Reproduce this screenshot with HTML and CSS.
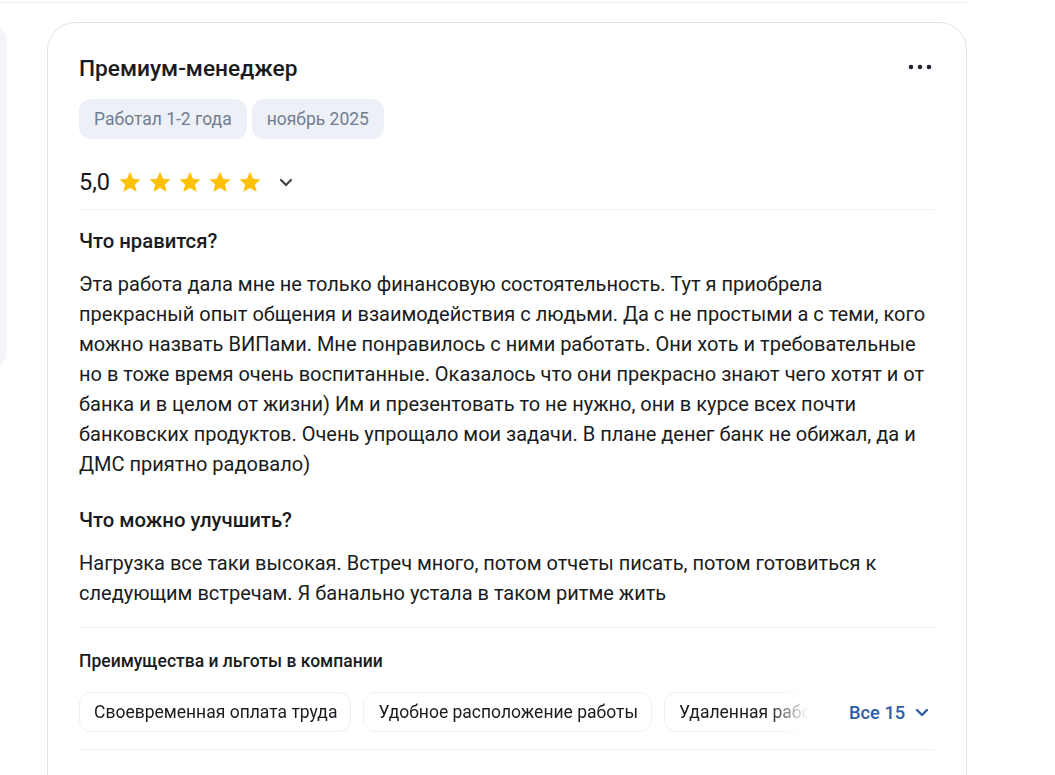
FILE: index.html
```html
<!DOCTYPE html>
<html lang="ru">
<head>
<meta charset="utf-8">
<title>Отзыв</title>
<link rel="stylesheet" href="styles.css">
</head>
<body>
<div class="topline"></div>
<div class="row">
  <div class="side-card"></div>
  <article class="card">
    <header class="card-head">
      <h2 class="title">Премиум-менеджер</h2>
      <button class="more" aria-label="Ещё">
        <svg width="24" height="6" viewBox="0 0 24 6"><circle cx="3" cy="3" r="2.3" fill="#1f2430"/><circle cx="12" cy="3" r="2.3" fill="#1f2430"/><circle cx="21" cy="3" r="2.3" fill="#1f2430"/></svg>
      </button>
    </header>
    <div class="tags">
      <span class="tag">Работал 1-2 года</span>
      <span class="tag">ноябрь 2025</span>
    </div>
    <div class="rating">
      <span class="score">5,0</span>
      <span class="stars">
        <svg class="star" viewBox="0 0 24 24"><path d="M12 1.8l3.1 6.9 7.4.7-5.6 5 1.7 7.4L12 17.9l-6.6 3.9 1.7-7.4-5.6-5 7.4-.7z" fill="#ffc107"/></svg>
        <svg class="star" viewBox="0 0 24 24"><path d="M12 1.8l3.1 6.9 7.4.7-5.6 5 1.7 7.4L12 17.9l-6.6 3.9 1.7-7.4-5.6-5 7.4-.7z" fill="#ffc107"/></svg>
        <svg class="star" viewBox="0 0 24 24"><path d="M12 1.8l3.1 6.9 7.4.7-5.6 5 1.7 7.4L12 17.9l-6.6 3.9 1.7-7.4-5.6-5 7.4-.7z" fill="#ffc107"/></svg>
        <svg class="star" viewBox="0 0 24 24"><path d="M12 1.8l3.1 6.9 7.4.7-5.6 5 1.7 7.4L12 17.9l-6.6 3.9 1.7-7.4-5.6-5 7.4-.7z" fill="#ffc107"/></svg>
        <svg class="star" viewBox="0 0 24 24"><path d="M12 1.8l3.1 6.9 7.4.7-5.6 5 1.7 7.4L12 17.9l-6.6 3.9 1.7-7.4-5.6-5 7.4-.7z" fill="#ffc107"/></svg>
      </span>
      <svg class="chev" width="14" height="9" viewBox="0 0 14 9"><path d="M2 2l5 5 5-5" fill="none" stroke="#444" stroke-width="2.2" stroke-linecap="round" stroke-linejoin="round"/></svg>
    </div>
    <hr class="divider">
    <section class="block">
      <h3 class="block-title">Что нравится?</h3>
      <p class="text">Эта работа дала мне не только финансовую состоятельность. Тут я приобрела<br>прекрасный опыт общения и взаимодействия с людьми. Да с не простыми а с теми, кого<br>можно назвать ВИПами. Мне понравилось с ними работать. Они хоть и требовательные<br>но в тоже время очень воспитанные. Оказалось что они прекрасно знают чего хотят и от<br>банка и в целом от жизни) Им и презентовать то не нужно, они в курсе всех почти<br>банковских продуктов. Очень упрощало мои задачи. В плане денег банк не обижал, да и<br>ДМС приятно радовало)</p>
    </section>
    <section class="block block-2">
      <h3 class="block-title">Что можно улучшить?</h3>
      <p class="text">Нагрузка все таки высокая. Встреч много, потом отчеты писать, потом готовиться к<br>следующим встречам. Я банально устала в таком ритме жить</p>
    </section>
    <hr class="divider divider-2">
    <section class="benefits">
      <h4 class="benefits-title">Преимущества и льготы в компании</h4>
      <div class="benefits-row">
        <div class="chips">
          <span class="chip">Своевременная оплата труда</span>
          <span class="chip">Удобное расположение работы</span>
          <span class="chip">Удаленная работа</span>
        </div>
        <button class="all">Все 15
          <svg width="14" height="9" viewBox="0 0 14 9"><path d="M2 2l5 5 5-5" fill="none" stroke="#2f5ea8" stroke-width="2.4" stroke-linecap="round" stroke-linejoin="round"/></svg>
        </button>
      </div>
    </section>
    <hr class="divider divider-3">
  </article>
</div>
</body>
</html>
```

FILE: styles.css
```css
* { box-sizing: border-box; }
html, body { margin: 0; padding: 0; background: #fff; }
body {
  font-family: Roboto, "Noto Sans", Arial, sans-serif;
  color: #1a1b20;
  width: 1055px;
  height: 775px;
  overflow: hidden;
}
.topline {
  margin-top: 2px;
  width: 967px;
  height: 1px;
  background: #eceef5;
}
.row {
  display: flex;
  align-items: flex-start;
  gap: 40px;
  margin-top: 19px;
}
.side-card {
  flex: none;
  width: 40px;
  margin-left: -33px;
  height: 349px;
  background: #f3f5fa;
  border-radius: 24px;
}
.card {
  flex: none;
  width: 920px;
  height: 800px;
  border: 1px solid #dfe4eb;
  border-radius: 28px;
  padding: 31px 31px 0 31px;
}
.card-head {
  display: flex;
  justify-content: space-between;
  align-items: center;
  height: 30px;
}
.title {
  margin: 0;
  font-size: 22.7px;
  font-weight: 500;
  line-height: 30px;
  color: #1a1b20;
}
.more {
  border: 0;
  background: none;
  padding: 0;
  margin-right: 3px;
  display: flex;
  margin-top: -4px;
}
.tags {
  display: flex;
  gap: 5px;
  margin-top: 15px;
}
.tag {
  height: 40px;
  display: inline-flex;
  align-items: center;
  padding: 0 15px;
  background: #edf0f6;
  border-radius: 12px;
  font-size: 17.5px;
  color: #717d91;
}
.rating {
  display: flex;
  align-items: center;
  height: 32px;
  margin-top: 27px;
}
.score {
  font-size: 23.5px;
  font-weight: 400;
  color: #16171b;
  margin-right: 8px;
}
.stars { display: flex; gap: 6px; }
.star { width: 24px; height: 24px; display: block; }
.chev { margin-left: 17px; margin-top: 1px; }
.divider {
  border: 0;
  height: 1px;
  background: #eef0f4;
  margin: 11px 0 0 0;
}
.block { margin-top: 19px; }
.block-title {
  margin: 0;
  font-size: 20.3px;
  font-weight: 500;
  line-height: 24px;
  color: #1a1b20;
}
.text {
  margin: 16px 0 0 0;
  font-size: 20px;
  line-height: 30px;
  color: #1a1b20;
}
.block-2 { margin-top: 29px; }
.divider-2 { margin-top: 19px; }
.benefits { margin-top: 22px; }
.benefits-title {
  margin: 0;
  font-size: 17.5px;
  font-weight: 500;
  line-height: 22px;
  color: #1a1b20;
}
.benefits-row {
  display: flex;
  align-items: center;
  margin-top: 20px;
}
.chips {
  display: flex;
  gap: 12px;
  width: 729px;
  overflow: hidden;
  flex: none;
  -webkit-mask-image: linear-gradient(to right, #000 690px, transparent 729px);
  mask-image: linear-gradient(to right, #000 690px, transparent 729px);
}
.chip {
  flex: none;
  height: 40px;
  display: inline-flex;
  align-items: center;
  padding: 0 13px 0 14px;
  border: 1px solid #eceef5;
  border-radius: 12px;
  font-size: 17.5px;
  color: #1a1b20;
}
.all {
  margin-left: 41px;
  border: 0;
  background: none;
  padding: 0;
  font-family: inherit;
  font-size: 18.3px;
  font-weight: 500;
  color: #2f5ea8;
  display: flex;
  align-items: center;
  gap: 10px;
}
.divider-3 { margin-top: 17px; }
```
